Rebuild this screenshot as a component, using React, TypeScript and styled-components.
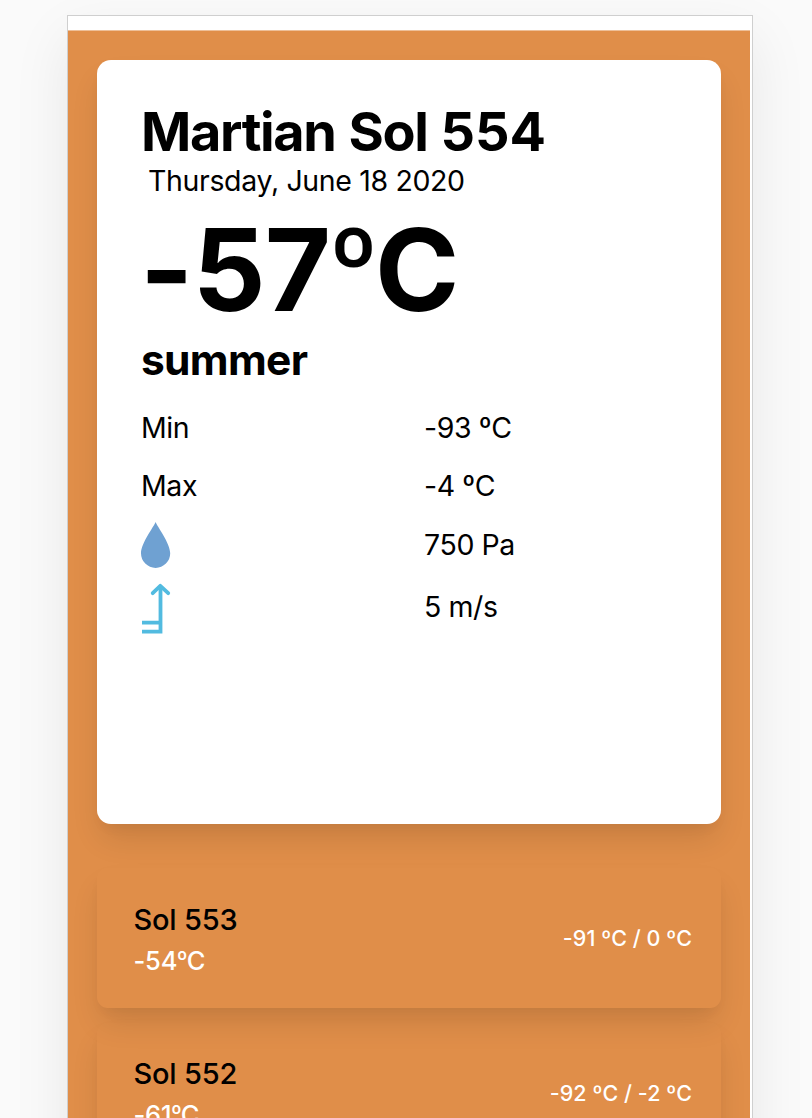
import React from "react";
import styled, { createGlobalStyle } from "styled-components";

const GlobalStyle = createGlobalStyle`
  * { box-sizing: border-box; }
  body {
    margin: 0;
    background: #fafafa;
    color: #000;
    font-family: Inter, "Liberation Sans", sans-serif;
    font-feature-settings: "calt" 0;
  }
`;

const Page = styled.div`
  height: 1118px;
  overflow: hidden;
  padding: 15px 59px 0 67px;
`;

const Frame = styled.div`
  height: 1180px;
  padding: 14px 2px 0 0;
  border: 1px solid #cfcfcf;
  background: #fff;
  box-shadow: 0 22px 54px rgba(0, 0, 0, 0.08);
`;

const Screen = styled.main`
  height: 100%;
  padding: 29px 29px 0;
  border-top: 1px solid #eebf98;
  background: #e08e49;
  overflow: hidden;
`;

const cardShadow =
  "0 18px 31px -4px rgba(0, 0, 0, 0.11), 0 7px 14px -4px rgba(0, 0, 0, 0.045)";

const TodayCard = styled.section`
  height: 764px;
  padding: 40px 44px;
  border-radius: 14px;
  background: #fff;
  box-shadow: ${cardShadow};
`;

interface TypeProps {
  $size: number;
  $line: number;
  $tracking?: number;
}

const Text = styled.div<TypeProps>`
  font-size: ${(p) => p.$size}px;
  line-height: ${(p) => p.$line}px;
  letter-spacing: ${(p) => p.$tracking ?? 0}px;
  white-space: nowrap;
`;

const Title = styled(Text).attrs({ as: "h1" })`
  margin: 0;
  font-weight: 700;
  word-spacing: 1.5px;
`;

const TitleNumber = styled.span`
  letter-spacing: 0;
`;

const DateLine = styled(Text)`
  padding-left: 7px;
`;

const Temperature = styled(Text)`
  margin-top: 9px;
  margin-left: -1px;
  font-weight: 700;
`;

const Degree = styled.span`
  margin: 0 -0.03em 0 -0.02em;
  font-size: 0.92em;
  line-height: 0;
  vertical-align: 0.08em;
`;

const Season = styled(Text).attrs({ as: "h2" })`
  margin: 1px 0 13px;
  font-weight: 700;
`;

const Readings = styled.div`
  display: grid;
  grid-template-columns: 283px 1fr;
  grid-template-rows: 58px 58px 59px 66px;
  align-items: center;
`;

const Icon = styled.svg`
  display: block;
`;

const SolCard = styled.article`
  display: flex;
  align-items: center;
  justify-content: space-between;
  height: 140px;
  margin-top: 14.5px;
  padding: 0 29px 0 36.5px;
  border-radius: 11px;
  box-shadow: ${cardShadow};
`;

const SolList = styled.section`
  padding-top: 29.5px;
`;

const SolSummary = styled.div`
  padding-top: 4px;
`;

const SolName = styled(Text)`
  font-weight: 500;
`;

const SolTemp = styled(Text)`
  margin-top: 3px;
  color: #fff;
  font-weight: 500;
`;

const SolRange = styled(Text)`
  color: #fff;
  font-weight: 500;
`;

const DropIcon = () => (
  <Icon width="30" height="48" viewBox="0 0 30 48">
    <path
      d="M14.6 1C13 5.5 0 22 0 32.300a14.600 14.600 0 0 0 29.200 0C29.200 22 16.200 5.500 14.600 1Z"
      fill="#6fa1d2"
    />
  </Icon>
);

const WindIcon = () => (
  <Icon width="30" height="56" viewBox="0 -4 30 56" fill="none" stroke="#52bbe0" strokeWidth="3.8">
    <path d="M19.500 3V50.500M1 39.700H19.500M1 48.600H19.500" />
    <path d="M11.700 10.200 19.300 2.800 27.200 10.200" strokeLinecap="round" strokeLinejoin="round" />
  </Icon>
);

const sols = [
  { sol: 553, average: "-54", range: "-91 ºC / 0 ºC" },
  { sol: 552, average: "-61", range: "-92 ºC / -2 ºC" },
];

const Reading = ({ children }: { children: React.ReactNode }) => (
  <Text $size={28.5} $line={34} $tracking={-0.4}>
    {children}
  </Text>
);

export default function App() {
  return (
    <Page>
      <GlobalStyle />
      <Frame>
        <Screen>
          <TodayCard>
            <Title $size={54} $line={64} $tracking={-1.35}>
              Martian Sol <TitleNumber>554</TitleNumber>
            </Title>
            <DateLine $size={28.5} $line={34} $tracking={-0.35}>Thursday, June 18 2020</DateLine>
            <Temperature $size={114} $line={126} $tracking={-0.7}>
              -57<Degree>º</Degree>C
            </Temperature>
            <Season $size={42.5} $line={52} $tracking={-0.7}>summer</Season>
            <Readings>
              <Reading>Min</Reading>
              <Reading>-93 ºC</Reading>
              <Reading>Max</Reading>
              <Reading>-4 ºC</Reading>
              <DropIcon />
              <Reading>750 Pa</Reading>
              <WindIcon />
              <Reading>5 m/s</Reading>
            </Readings>
          </TodayCard>
          <SolList>
            {sols.map((s) => (
              <SolCard key={s.sol}>
                <SolSummary>
                  <SolName $size={29} $line={38} $tracking={-0.2}>Sol {s.sol}</SolName>
                  <SolTemp $size={25.5} $line={38} $tracking={-0.2}>
                    {s.average}<Degree>º</Degree>C
                  </SolTemp>
                </SolSummary>
                <SolRange $size={21.5} $line={30} $tracking={0.05}>{s.range}</SolRange>
              </SolCard>
            ))}
          </SolList>
        </Screen>
      </Frame>
    </Page>
  );
}
